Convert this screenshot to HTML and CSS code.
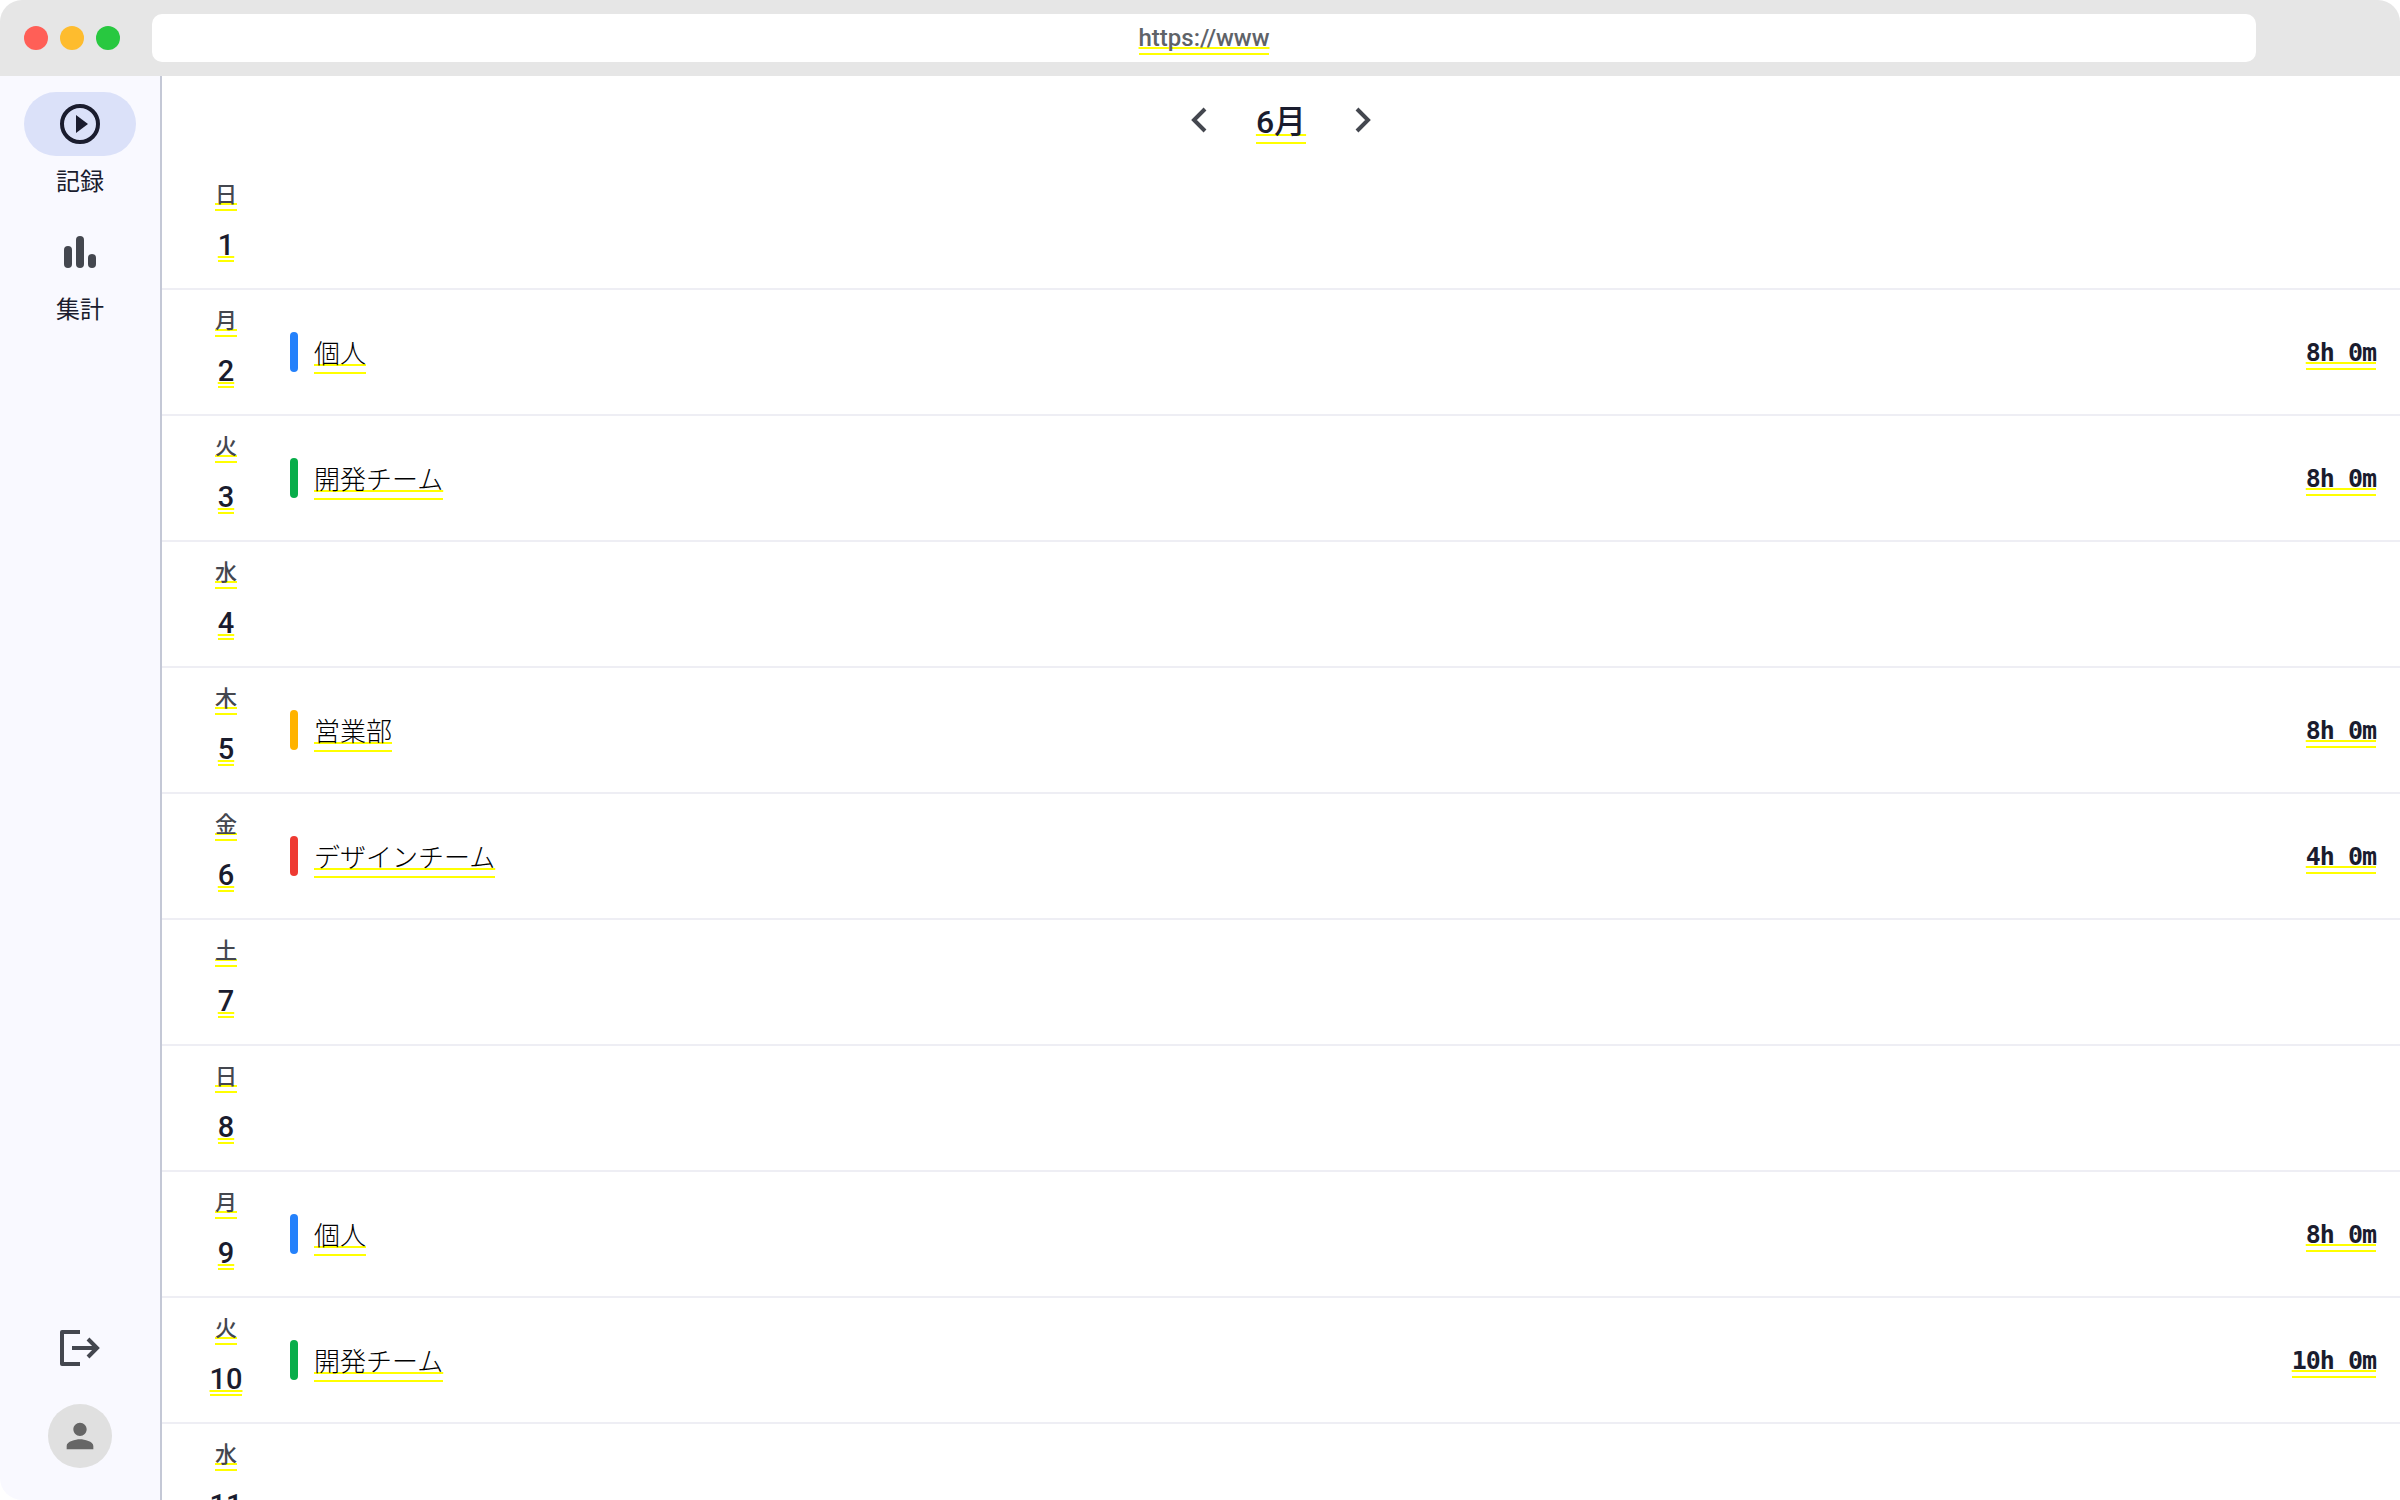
FILE: index.html
```html
<!DOCTYPE html>
<html lang="ja">
	<head>
		<meta charset="utf-8" />
		<title>記録</title>
		<link rel="stylesheet" href="styles.css">
	</head>
	<body>
		<div class="window">
			<div class="browser-bar">
				<div class="lights">
					<span class="light light-red"></span>
					<span class="light light-yellow"></span>
					<span class="light light-green"></span>
				</div>
				<div class="address"><span class="mark">https://www</span></div>
			</div>
			<div class="app">
				<nav class="side">
					<div class="side-top">
						<a class="nav-item">
							<span class="nav-pill nav-pill-active">
								<svg width="48" height="48" viewBox="0 0 48 48"><circle cx="24" cy="24" r="18" fill="none" stroke="#1a1c2e" stroke-width="4"/><path d="M20 15L32 24L20 33Z" fill="#1a1c2e"/></svg>
							</span>
							<span class="nav-label">記録</span>
						</a>
						<a class="nav-item">
							<span class="nav-pill">
								<svg width="48" height="48" viewBox="0 0 48 48" fill="#44474f"><rect x="8" y="18" width="8" height="22" rx="4"/><rect x="20" y="8" width="8" height="32" rx="4"/><rect x="32" y="26" width="8" height="14" rx="4"/></svg>
							</span>
							<span class="nav-label">集計</span>
						</a>
					</div>
					<div class="side-bottom">
						<svg width="48" height="48" viewBox="0 0 48 48" fill="none" stroke="#44474f" stroke-width="4"><path d="M24 8H6V40H24" stroke-linejoin="round"/><path d="M16 24H41M32 15L41 24L32 33"/></svg>
						<div class="avatar">
							<svg width="40" height="40" viewBox="0 0 24 24" fill="#666"><path d="M12 12c2.200 0 4-1.800 4-4s-1.800-4-4-4-4 1.800-4 4 1.800 4 4 4zm0 2c-2.700 0-8 1.300-8 4v2h16v-2c0-2.700-5.300-4-8-4z"/></svg>
						</div>
					</div>
				</nav>
				<main class="main">
					<div class="month">
						<svg width="24" height="32" viewBox="0 0 24 32" fill="none" stroke="#44474f" stroke-width="4"><path d="M17 5L6 16L17 27"/></svg>
						<span class="month-name mark">6月</span>
						<svg width="24" height="32" viewBox="0 0 24 32" fill="none" stroke="#44474f" stroke-width="4"><path d="M7 5L18 16L7 27"/></svg>
					</div>
					<div class="day">
						<div class="date"><span class="weekday mark">日</span><span class="num mark">1</span></div>
					</div>
					<div class="day">
						<div class="date"><span class="weekday mark">月</span><span class="num mark">2</span></div>
						<i class="tag tag-blue"></i><span class="project mark">個人</span>
						<span class="time mark">8h 0m</span>
					</div>
					<div class="day">
						<div class="date"><span class="weekday mark">火</span><span class="num mark">3</span></div>
						<i class="tag tag-green"></i><span class="project mark">開発チーム</span>
						<span class="time mark">8h 0m</span>
					</div>
					<div class="day">
						<div class="date"><span class="weekday mark">水</span><span class="num mark">4</span></div>
					</div>
					<div class="day">
						<div class="date"><span class="weekday mark">木</span><span class="num mark">5</span></div>
						<i class="tag tag-amber"></i><span class="project mark">営業部</span>
						<span class="time mark">8h 0m</span>
					</div>
					<div class="day">
						<div class="date"><span class="weekday mark">金</span><span class="num mark">6</span></div>
						<i class="tag tag-red"></i><span class="project mark">デザインチーム</span>
						<span class="time mark">4h 0m</span>
					</div>
					<div class="day">
						<div class="date"><span class="weekday mark">土</span><span class="num mark">7</span></div>
					</div>
					<div class="day">
						<div class="date"><span class="weekday mark">日</span><span class="num mark">8</span></div>
					</div>
					<div class="day">
						<div class="date"><span class="weekday mark">月</span><span class="num mark">9</span></div>
						<i class="tag tag-blue"></i><span class="project mark">個人</span>
						<span class="time mark">8h 0m</span>
					</div>
					<div class="day">
						<div class="date"><span class="weekday mark">火</span><span class="num mark">10</span></div>
						<i class="tag tag-green"></i><span class="project mark">開発チーム</span>
						<span class="time mark">10h 0m</span>
					</div>
					<div class="day">
						<div class="date"><span class="weekday mark">水</span><span class="num mark">11</span></div>
					</div>
				</main>
			</div>
		</div>
	</body>
</html>
```
FILE: styles.css
```css
html, body{
	margin: 0;
	height: 100%;
	background-color: #FFFFFF;
}
body{
	font-family: Roboto, "Noto Sans CJK JP", sans-serif;
	color: #1a1c2e;
}
/* two thin yellow lines under the text */
.mark{
	text-decoration: underline #ffff00 2px;
	text-decoration-skip-ink: none;
	text-underline-offset: 1px;
	background-image: linear-gradient(#ffff00, #ffff00);
	background-repeat: no-repeat;
	background-size: 100% 2px;
	background-position: 0 100%;
}
.window{
	display: flex;
	flex-direction: column;
	height: 1500px;
	border-radius: 22px;
	overflow: hidden;
}
.browser-bar{
	display: flex;
	align-items: center;
	flex: none;
	height: 76px;
	background-color: #e6e6e6;
}
.lights{
	display: flex;
	gap: 12px;
	margin-left: 24px;
	width: 128px;
}
.light{
	width: 24px;
	height: 24px;
	border-radius: 50%;
}
.light-red{
	background-color: #ff5f57;
}
.light-yellow{
	background-color: #febc2e;
}
.light-green{
	background-color: #28c840;
}
.address{
	display: flex;
	align-items: center;
	justify-content: center;
	width: 2104px;
	height: 48px;
	border-radius: 10px;
	background-color: #FFFFFF;
	font-size: 24px;
	font-weight: 500;
	line-height: 34px;
	color: #5f6368;
}
.app{
	display: flex;
	flex: 1;
	min-height: 0;
}
.side{
	display: flex;
	flex-direction: column;
	justify-content: space-between;
	flex: none;
	box-sizing: border-box;
	width: 162px;
	padding: 16px 0 32px;
	background-color: #f9f9ff;
	border-right: 2px solid #c4c8d6;
}
.side-top{
	display: flex;
	flex-direction: column;
	align-items: center;
	gap: 20px;
}
.nav-item{
	display: flex;
	flex-direction: column;
	align-items: center;
	gap: 8px;
}
.nav-pill{
	display: flex;
	align-items: center;
	justify-content: center;
	width: 112px;
	height: 64px;
	border-radius: 32px;
}
.nav-pill-active{
	background-color: #dbe1f9;
}
.nav-label{
	font-size: 24px;
	line-height: 36px;
}
.side-bottom{
	display: flex;
	flex-direction: column;
	align-items: center;
	gap: 32px;
}
.avatar{
	display: flex;
	align-items: center;
	justify-content: center;
	width: 64px;
	height: 64px;
	border-radius: 50%;
	background-color: #e0e0e0;
}
.main{
	flex: 1;
	min-width: 0;
	overflow: hidden;
}
.month{
	display: flex;
	align-items: center;
	justify-content: center;
	gap: 44px;
	height: 88px;
}
.month-name{
	margin-top: 4px;
	font-size: 32px;
	font-weight: 500;
	line-height: 48px;
	background-position: 0 calc(100% - 2px);
}
.day{
	display: flex;
	align-items: center;
	box-sizing: border-box;
	height: 126px;
	padding-right: 24px;
	border-bottom: 2px solid #eeeef4;
}
.date{
	display: flex;
	flex-direction: column;
	align-items: center;
	flex: none;
	gap: 14px;
	width: 128px;
	padding-bottom: 8px;
}
.weekday{
	font-size: 22px;
	font-weight: 500;
	line-height: 32px;
	color: #44474f;
}
.num{
	font-size: 29px;
	font-weight: 500;
	line-height: 40px;
	background-position: 0 calc(100% - 3px);
}
.tag{
	flex: none;
	width: 8px;
	height: 40px;
	margin-right: 16px;
	border-radius: 4px;
}
.tag-blue{
	background-color: #2481fb;
}
.tag-green{
	background-color: #08ad4a;
}
.tag-amber{
	background-color: #ffb300;
}
.tag-red{
	background-color: #ee3a32;
}
.project{
	margin-top: 4px;
	font-size: 26px;
	font-weight: 300;
	line-height: 44px;
	color: #000000;
	background-position: 0 calc(100% - 2px);
}
.time{
	margin-top: 2px;
	margin-left: auto;
	font-family: "DejaVu Sans Mono", monospace;
	font-size: 25px;
	font-weight: 700;
	line-height: 36px;
	letter-spacing: -1px;
	background-position: 0 calc(100% - 1px);
}
```
